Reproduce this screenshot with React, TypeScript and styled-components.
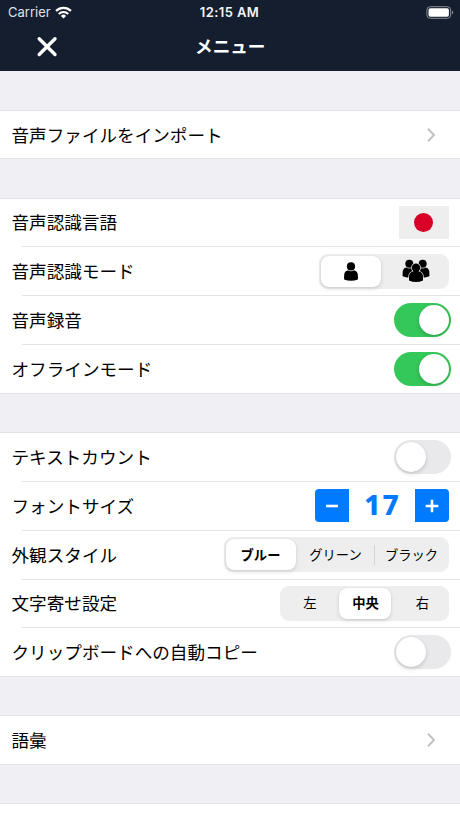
import React, { useState } from 'react';
import styled, { createGlobalStyle, css } from 'styled-components';

const GlobalStyle = createGlobalStyle`
  *, *::before, *::after { box-sizing: border-box; }
  body {
    margin: 0;
    background: #efeff4;
    color: #000;
    font-family: "Noto Sans CJK JP", sans-serif;
    overflow: hidden;
  }
  button { font: inherit; color: inherit; border: 0; padding: 0; margin: 0; background: none; }
`;

const Screen = styled.div`
  width: 460px;
  height: 818px;
  overflow: hidden;
  background: #efeff4;
`;

const Header = styled.header`
  height: 71px;
  background: #151e2e;
  color: #fff;
`;

const StatusBar = styled.div`
  height: 23px;
  padding: 0 6px 0 8px;
  display: grid;
  grid-template-columns: 1fr auto 1fr;
  align-items: center;
  font-family: Inter, sans-serif;
  font-size: 13px;
  line-height: 23px;
`;

const Carrier = styled.div`
  display: flex;
  align-items: center;
  gap: 4.5px;
  color: #dfe2e8;
`;

const CarrierName = styled.span`
  padding-top: 1px;
`;

const Clock = styled.div`
  padding-top: 1px;
  font-weight: 600;
  letter-spacing: 0.4px;
  margin-right: 3px;
  color: #f4f5f7;
`;

const BatterySlot = styled.div`
  display: flex;
  justify-content: flex-end;
`;

const NavBar = styled.div`
  height: 47px;
  padding: 0 35px 0 35.5px;
  display: grid;
  grid-template-columns: 1fr auto 1fr;
  align-items: center;
`;

const CloseButton = styled.button`
  width: 22px;
  height: 22px;
  display: flex;
`;

const Title = styled.h1`
  margin: -1px 0 0;
  font-size: 17.6px;
  line-height: 24px;
  font-weight: 700;
`;

const Section = styled.section`
  margin-top: 39.1px;
  background: linear-gradient(#e2e2e6, #e2e2e6) top / 100% 1px no-repeat #fff;
  box-shadow: 0 1px 0 #e2e2e6;
  &:first-of-type { margin-top: 38.6px; }
`;

const Row = styled.div`
  height: 48.85px;
  padding: 1px 11.5px 0;
  display: flex;
  align-items: center;
  justify-content: space-between;
  & + & {
    background: linear-gradient(#e4e4e6, #e4e4e6) 22px 0 / 100% 1px no-repeat;
  }
`;

const Label = styled.span`
  font-size: 17.6px;
  line-height: 26px;
  white-space: nowrap;
  font-weight: 400;
`;

const ChevronSlot = styled.span`
  display: flex;
  margin-right: 13.5px;
`;

const Flag = styled.span`
  width: 50px;
  height: 33px;
  display: flex;
  align-items: center;
  justify-content: center;
  background: #eee;
  &::after {
    content: "";
    width: 19px;
    height: 19px;
    border-radius: 50%;
    background: #d80027;
  }
`;

const SwitchTrack = styled.button<{ $on: boolean }>`
  width: 57px;
  height: 34px;
  margin-right: -2.5px;
  padding: 2px;
  border-radius: 17px;
  display: flex;
  justify-content: ${p => (p.$on ? 'flex-end' : 'flex-start')};
  background: ${p => (p.$on ? '#34c759' : '#e9e9eb')};
`;

const SwitchKnob = styled.span`
  width: 30px;
  height: 30px;
  border-radius: 50%;
  background: #fff;
  box-shadow: 0 2px 4px rgba(0, 0, 0, 0.15), 0 0 1px rgba(0, 0, 0, 0.1);
`;

const Segments = styled.div<{ $columns: string; $lastInset: number }>`
  height: 35px;
  padding: 2px;
  display: grid;
  grid-template-columns: ${p => p.$columns};
  border-radius: 9px;
  background: #eeeeef;
  & > :last-child { padding-left: ${p => p.$lastInset}px; }
`;

const Segment = styled.button<{ $selected: boolean; $divider?: boolean }>`
  display: flex;
  align-items: center;
  justify-content: center;
  padding-left: 2px;
  font-size: 13.3px;
  line-height: 20px;
  white-space: nowrap;
  &:first-child { padding-left: 0; }
  ${p => p.$selected && css`
    font-weight: 700;
    border-radius: 8px;
    background: #fff;
    box-shadow: 0 2px 4px rgba(0, 0, 0, 0.12), 0 0 1px rgba(0, 0, 0, 0.14);
  `}
  ${p => p.$divider && css`
    background: linear-gradient(#d5d5d8, #d5d5d8) left center / 1px 20px no-repeat;
  `}
`;

const Stepper = styled.div`
  height: 33px;
  display: grid;
  margin-right: -0.5px;
  grid-template-columns: 34px 66px 34px;
`;

const StepButton = styled.button<{ $side: 'left' | 'right' }>`
  display: flex;
  align-items: center;
  justify-content: center;
  background: #007aff;
  border-radius: ${p => (p.$side === 'left' ? '4px 0 0 4px' : '0 4px 4px 0')};
`;

const StepValue = styled.output`
  text-align: center;
  font-family: "Noto Sans", sans-serif;
  font-weight: 800;
  font-size: 28px;
  line-height: 30px;
  letter-spacing: 2px;
  padding-left: 1px;
  color: #007aff;
`;

const WifiIcon = () => (
  <svg width="17" height="13" viewBox="0 0 18 13" fill="none" stroke="#fff" strokeWidth="2.3">
    <path d="M1.1 4.8a11.3 11.3 0 0 1 15.8 0" />
    <path d="M4 8a7.1 7.1 0 0 1 10 0" />
    <path d="M9 12.8 6.3 10.1a3.8 3.8 0 0 1 5.4 0Z" fill="#fff" stroke="none" />
  </svg>
);

const BatteryIcon = () => (
  <svg width="28" height="13" viewBox="0 0 28 13">
    <rect x="0.9" y="0.7" width="23.7" height="11.6" rx="3.3" fill="none" stroke="#858b95" />
    <rect x="2.5" y="2.3" width="20.4" height="8.4" rx="1.8" fill="#fff" />
    <path d="M25.9 4.5c1.7.6 1.7 3.4 0 4Z" fill="#858b95" />
  </svg>
);

const CloseIcon = () => (
  <svg width="22" height="22" viewBox="0 0 22 22" stroke="#fff" strokeWidth="3.4" strokeLinecap="round">
    <path d="m3.2 2.7 15.8 15.8m0-15.8-15.8 15.8" />
  </svg>
);

const Chevron = () => (
  <svg width="8" height="14" viewBox="0 0 8 14" fill="none" stroke="#c2c2c5" strokeWidth="2">
    <path d="m1 .8 6 6.2-6 6.2" />
  </svg>
);

const PersonIcon = () => (
  <svg width="14" height="19" viewBox="0 0 14 19">
    <circle cx="7" cy="4.4" r="4.1" />
    <path d="M.1 17.4v-3.6Q.1 9 4 8.2q3 2 6 0 3.9.8 3.9 5.6v3.6Q7 20.2.1 17.4Z" />
  </svg>
);

const GroupIcon = () => (
  <svg width="28" height="24" viewBox="0 0 28 24">
    <circle cx="7.3" cy="4.7" r="4" />
    <path d="M.6 17.3v-3.5Q.6 9.3 4.3 8.6q3 1.7 6 0 4 1 4 5.2v3.5Q7 20 .6 17.3Z" />
    <circle cx="20.7" cy="4.7" r="4" />
    <path d="M27.4 17.3v-3.5q0-4.5-3.7-5.2-3 1.7-6 0-4 1-4 5.2v3.5q7.3 2.7 13.7 0Z" />
    <path d="M7 21.5v-3.7q0-4.4 3.8-5.2 3.2 1.8 6.4 0 3.8.8 3.8 5.2v3.7q-7 3-14 0Z" stroke="#eeeeef" strokeWidth="1.4" paintOrder="stroke" />
    <circle cx="14" cy="8.8" r="4.2" stroke="#eeeeef" strokeWidth="1.4" paintOrder="stroke" />
    <path d="M10.8 12.6q3.2-2 6.4 0v2h-6.4Z" />
  </svg>
);

const MinusIcon = () => (
  <svg width="14" height="14" viewBox="0 0 14 14" stroke="#fff" strokeWidth="2.6">
    <path d="M1 7h12" />
  </svg>
);

const PlusIcon = () => (
  <svg width="14" height="14" viewBox="0 0 14 14" stroke="#fff" strokeWidth="2.6">
    <path d="M.7 7h12.6M7 .7v12.6" />
  </svg>
);

function Switch({ initial, label }: { initial: boolean; label: string }) {
  const [on, setOn] = useState(initial);
  return (
    <SwitchTrack $on={on} role="switch" aria-checked={on} aria-label={label} onClick={() => setOn(!on)}>
      <SwitchKnob />
    </SwitchTrack>
  );
}

interface SegmentedControlProps {
  items: React.ReactNode[];
  initial: number;
  columns: string;
  lastInset: number;
}

function SegmentedControl({ items, initial, columns, lastInset }: SegmentedControlProps) {
  const [selected, setSelected] = useState(initial);
  return (
    <Segments $columns={columns} $lastInset={lastInset}>
      {items.map((item, i) => (
        <Segment
          key={i}
          $selected={i === selected}
          $divider={i > 0 && i !== selected && i - 1 !== selected}
          onClick={() => setSelected(i)}
        >
          {item}
        </Segment>
      ))}
    </Segments>
  );
}

function FontSizeStepper() {
  const [size, setSize] = useState(17);
  return (
    <Stepper>
      <StepButton $side="left" aria-label="−" onClick={() => setSize(size - 1)}><MinusIcon /></StepButton>
      <StepValue>{size}</StepValue>
      <StepButton $side="right" aria-label="+" onClick={() => setSize(size + 1)}><PlusIcon /></StepButton>
    </Stepper>
  );
}

function Setting({ label, children }: { label: string; children: React.ReactNode }) {
  return (
    <Row>
      <Label>{label}</Label>
      {children}
    </Row>
  );
}

export default function App() {
  return (
    <>
      <GlobalStyle />
      <Screen>
        <Header>
          <StatusBar>
            <Carrier><CarrierName>Carrier</CarrierName><WifiIcon /></Carrier>
            <Clock>12:15 AM</Clock>
            <BatterySlot><BatteryIcon /></BatterySlot>
          </StatusBar>
          <NavBar>
            <CloseButton><CloseIcon /></CloseButton>
            <Title>メニュー</Title>
          </NavBar>
        </Header>
        <Section>
          <Setting label="音声ファイルをインポート"><ChevronSlot><Chevron /></ChevronSlot></Setting>
        </Section>
        <Section>
          <Setting label="音声認識言語"><Flag /></Setting>
          <Setting label="音声認識モード">
            <SegmentedControl columns="60px 66px" lastInset={5} initial={0} items={[<PersonIcon />, <GroupIcon />]} />
          </Setting>
          <Setting label="音声録音"><Switch initial={true} label="音声録音" /></Setting>
          <Setting label="オフラインモード"><Switch initial={true} label="オフラインモード" /></Setting>
        </Section>
        <Section>
          <Setting label="テキストカウント"><Switch initial={false} label="テキストカウント" /></Setting>
          <Setting label="フォントサイズ"><FontSizeStepper /></Setting>
          <Setting label="外観スタイル">
            <SegmentedControl columns="70px 78px 73px" lastInset={3} initial={0} items={['ブルー', 'グリーン', 'ブラック']} />
          </Setting>
          <Setting label="文字寄せ設定">
            <SegmentedControl columns="57px 52px 56px" lastInset={8} initial={1} items={['左', '中央', '右']} />
          </Setting>
          <Setting label="クリップボードへの自動コピー"><Switch initial={false} label="クリップボードへの自動コピー" /></Setting>
        </Section>
        <Section>
          <Setting label="語彙"><ChevronSlot><Chevron /></ChevronSlot></Setting>
        </Section>
        <Section>
          <Row />
        </Section>
      </Screen>
    </>
  );
}
